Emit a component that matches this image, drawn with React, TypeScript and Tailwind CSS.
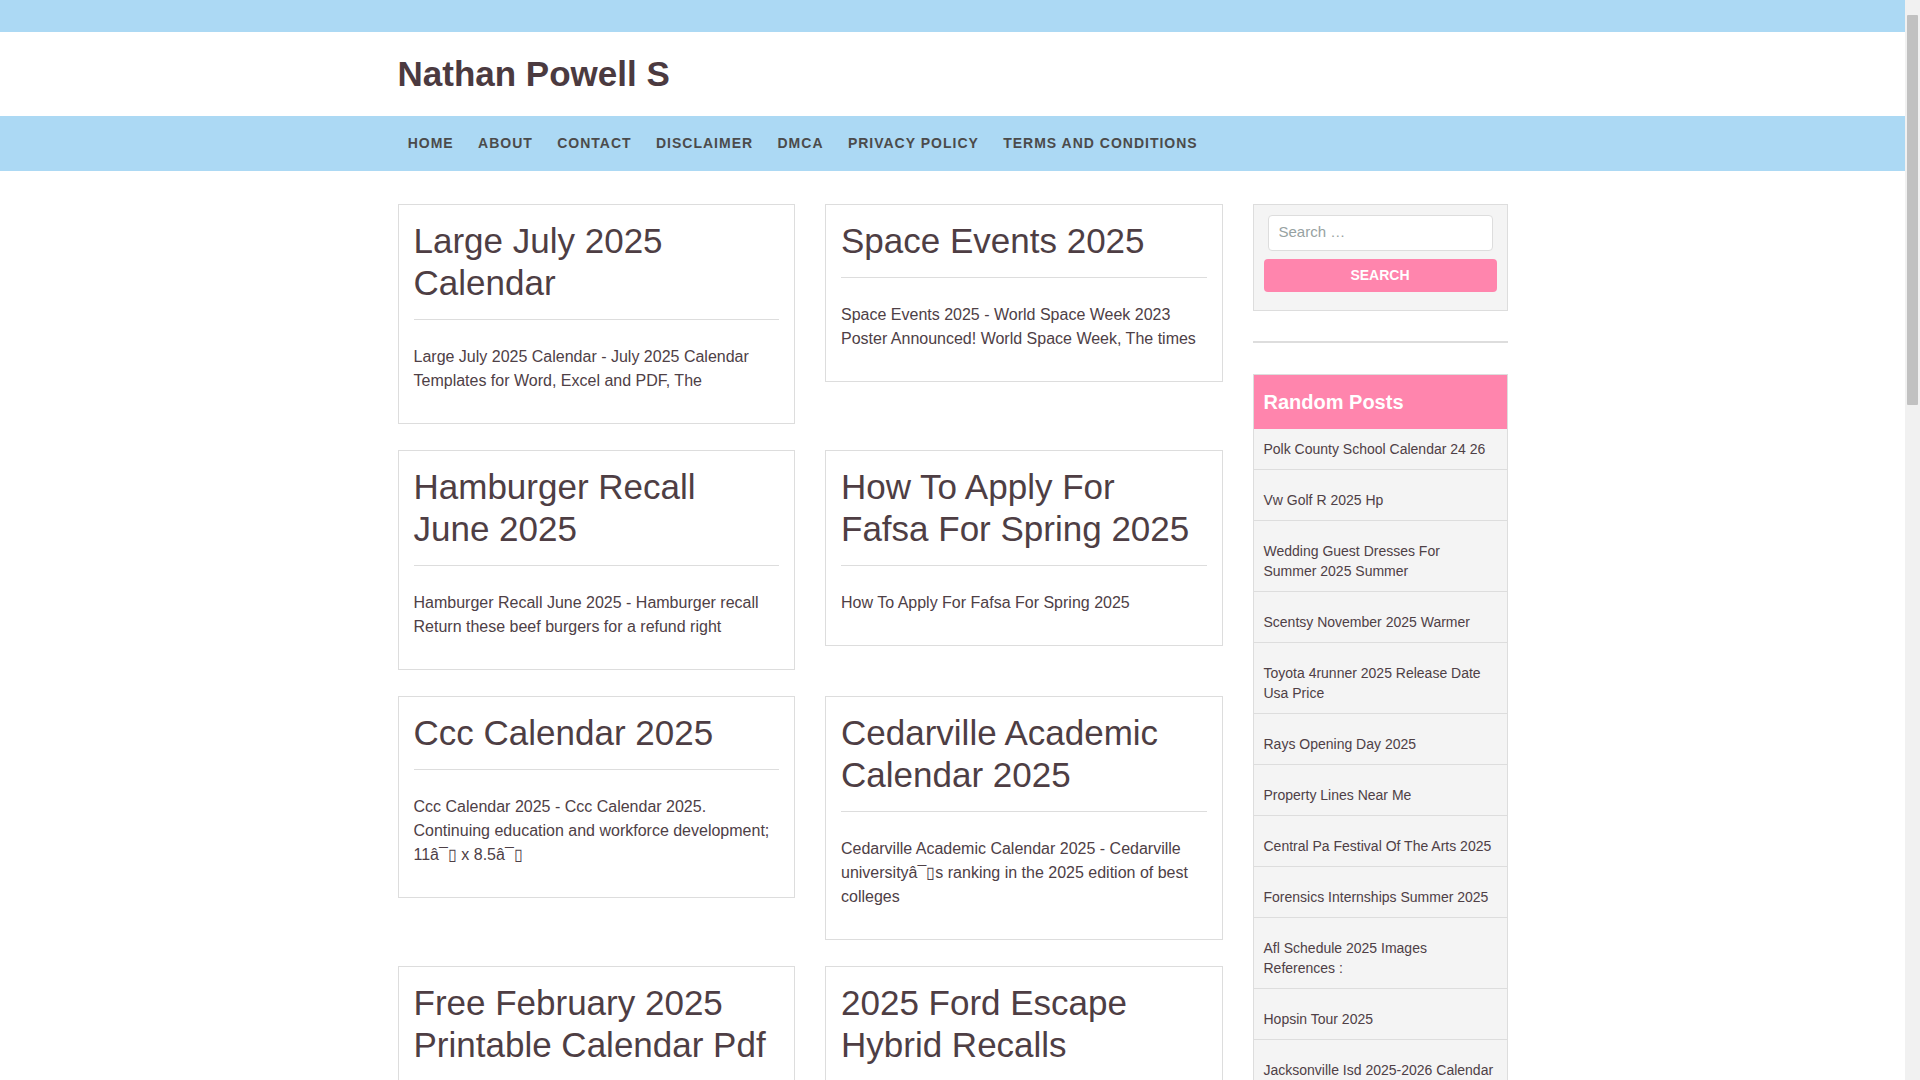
import React from "react";

const posts: { title: string; excerpt: string }[] = [
  {
    title: "Large July 2025 Calendar",
    excerpt: "Large July 2025 Calendar - July 2025 Calendar Templates for Word, Excel and PDF, The",
  },
  {
    title: "Space Events 2025",
    excerpt: "Space Events 2025 - World Space Week 2023 Poster Announced! World Space Week, The times",
  },
  {
    title: "Hamburger Recall June 2025",
    excerpt: "Hamburger Recall June 2025 - Hamburger recall Return these beef burgers for a refund right",
  },
  {
    title: "How To Apply For Fafsa For Spring 2025",
    excerpt: "How To Apply For Fafsa For Spring 2025",
  },
  {
    title: "Ccc Calendar 2025",
    excerpt: "Ccc Calendar 2025 - Ccc Calendar 2025. Continuing education and workforce development; 11â¯▯ x 8.5â¯▯",
  },
  {
    title: "Cedarville Academic Calendar 2025",
    excerpt: "Cedarville Academic Calendar 2025 - Cedarville universityâ¯▯s ranking in the 2025 edition of best colleges",
  },
  {
    title: "Free February 2025 Printable Calendar Pdf",
    excerpt: "Free February 2025 Printable Calendar Pdf - Free printable February 2025 calendar templates in PDF",
  },
  {
    title: "2025 Ford Escape Hybrid Recalls",
    excerpt: "2025 Ford Escape Hybrid Recalls - Ford recalls 2025 Escape hybrid models",
  },
];

const randomPosts: string[] = [
  "Polk County School Calendar 24 26",
  "Vw Golf R 2025 Hp",
  "Wedding Guest Dresses For Summer 2025 Summer",
  "Scentsy November 2025 Warmer",
  "Toyota 4runner 2025 Release Date Usa Price",
  "Rays Opening Day 2025",
  "Property Lines Near Me",
  "Central Pa Festival Of The Arts 2025",
  "Forensics Internships Summer 2025",
  "Afl Schedule 2025 Images References :",
  "Hopsin Tour 2025",
  "Jacksonville Isd 2025-2026 Calendar",
];

const navItems = ["Home", "About", "Contact", "Disclaimer", "DMCA", "Privacy Policy", "Terms and Conditions"];

function PostCard({ title, excerpt }: { title: string; excerpt: string }) {
  return (
    <article className="border border-[#dddddd] bg-white px-[15px] pt-[15px] pb-[30px]">
      <h2 className="text-[35px] leading-[42px] font-normal text-[#4e3e44]">
        <a href="#">{title}</a>
      </h2>
      <div className="mt-[15.5px] h-px bg-[#dddddd]" />
      <p className="mt-[24.5px] text-[16px] leading-[24px] text-[#4e4046]">{excerpt}</p>
    </article>
  );
}

export default function App() {
  return (
    <div className="relative min-h-screen bg-white font-['Liberation_Sans',Arial,sans-serif] text-[#4e4046]">
      <div className="h-[32px] bg-[#acd9f4]" />
      <header className="bg-white pr-[15px]">
        <div className="mx-auto flex h-[84px] w-[1110px] items-center">
          <h1 className="-mt-[2px] text-[35px] font-bold leading-none text-[#4b3a40]">
            <a href="#">Nathan Powell S</a>
          </h1>
        </div>
      </header>
      <nav className="bg-[#acd9f4] pr-[15px]">
        <ul className="mx-auto flex h-[55px] w-[1110px] items-center">
          {navItems.map((item, i) => (
            <li key={item} className={i === 0 ? "-ml-[2px]" : ""}>
              <a
                href="#"
                className="block px-[12.2px] text-[14px] font-bold uppercase tracking-[1px] text-[#4b4b4b]"
              >
                {item}
              </a>
            </li>
          ))}
        </ul>
      </nav>
      <div className="pr-[15px]">
        <main className="mx-auto flex w-[1110px] items-start gap-[30px] pt-[32.5px] pb-[40px]">
          <div className="grid w-[825px] grid-cols-2 items-start gap-x-[30px] gap-y-[26px]">
            {posts.map((p) => (
              <PostCard key={p.title} title={p.title} excerpt={p.excerpt} />
            ))}
          </div>
          <aside className="w-[255px]">
            <div className="border border-[#dddddd] bg-[#f4f4f4] px-[10px] pt-[10px] pb-[18px]">
              <div className="mx-[4px] flex h-[36px] items-center rounded-[4px] border border-[#dddddd] bg-white px-[10px]">
                <input
                  type="search"
                  placeholder="Search …"
                  className="w-full bg-transparent text-[15px] text-[#555] outline-none placeholder:text-[#97a2a2]"
                />
              </div>
              <button className="mt-[8px] h-[33px] w-full rounded-[4px] bg-[#ff85ad] text-[14px] font-bold uppercase text-white">
                Search
              </button>
            </div>
            <div className="mt-[30px] h-[2px] bg-[#dddddd]" />
            <div className="mt-[31px] border border-[#dddddd] bg-[#f4f4f4]">
              <div className="flex h-[54px] items-center bg-[#ff85ad] px-[10px]">
                <h3 className="text-[20px] font-bold text-white">Random Posts</h3>
              </div>
              <ul>
                {randomPosts.map((t, i) => (
                  <li
                    key={t}
                    className={
                      i === 0
                        ? "pl-[10px] pr-[12px] py-[10px] text-[14px] leading-[20px]"
                        : "border-t border-[#dddddd] pl-[10px] pr-[12px] pt-[20px] pb-[10px] text-[14px] leading-[20px]"
                    }
                  >
                    <a href="#" className="text-[#4e4046]">
                      {t}
                    </a>
                  </li>
                ))}
              </ul>
            </div>
          </aside>
        </main>
      </div>
      <div className="fixed top-0 right-0 flex h-screen w-[15px] flex-col bg-[#f1f1f1]">
        <div className="h-[15px]" />
        <div className="mx-[2px] h-[390px] rounded-[1px] bg-[#c1c1c1]" />
      </div>
    </div>
  );
}
